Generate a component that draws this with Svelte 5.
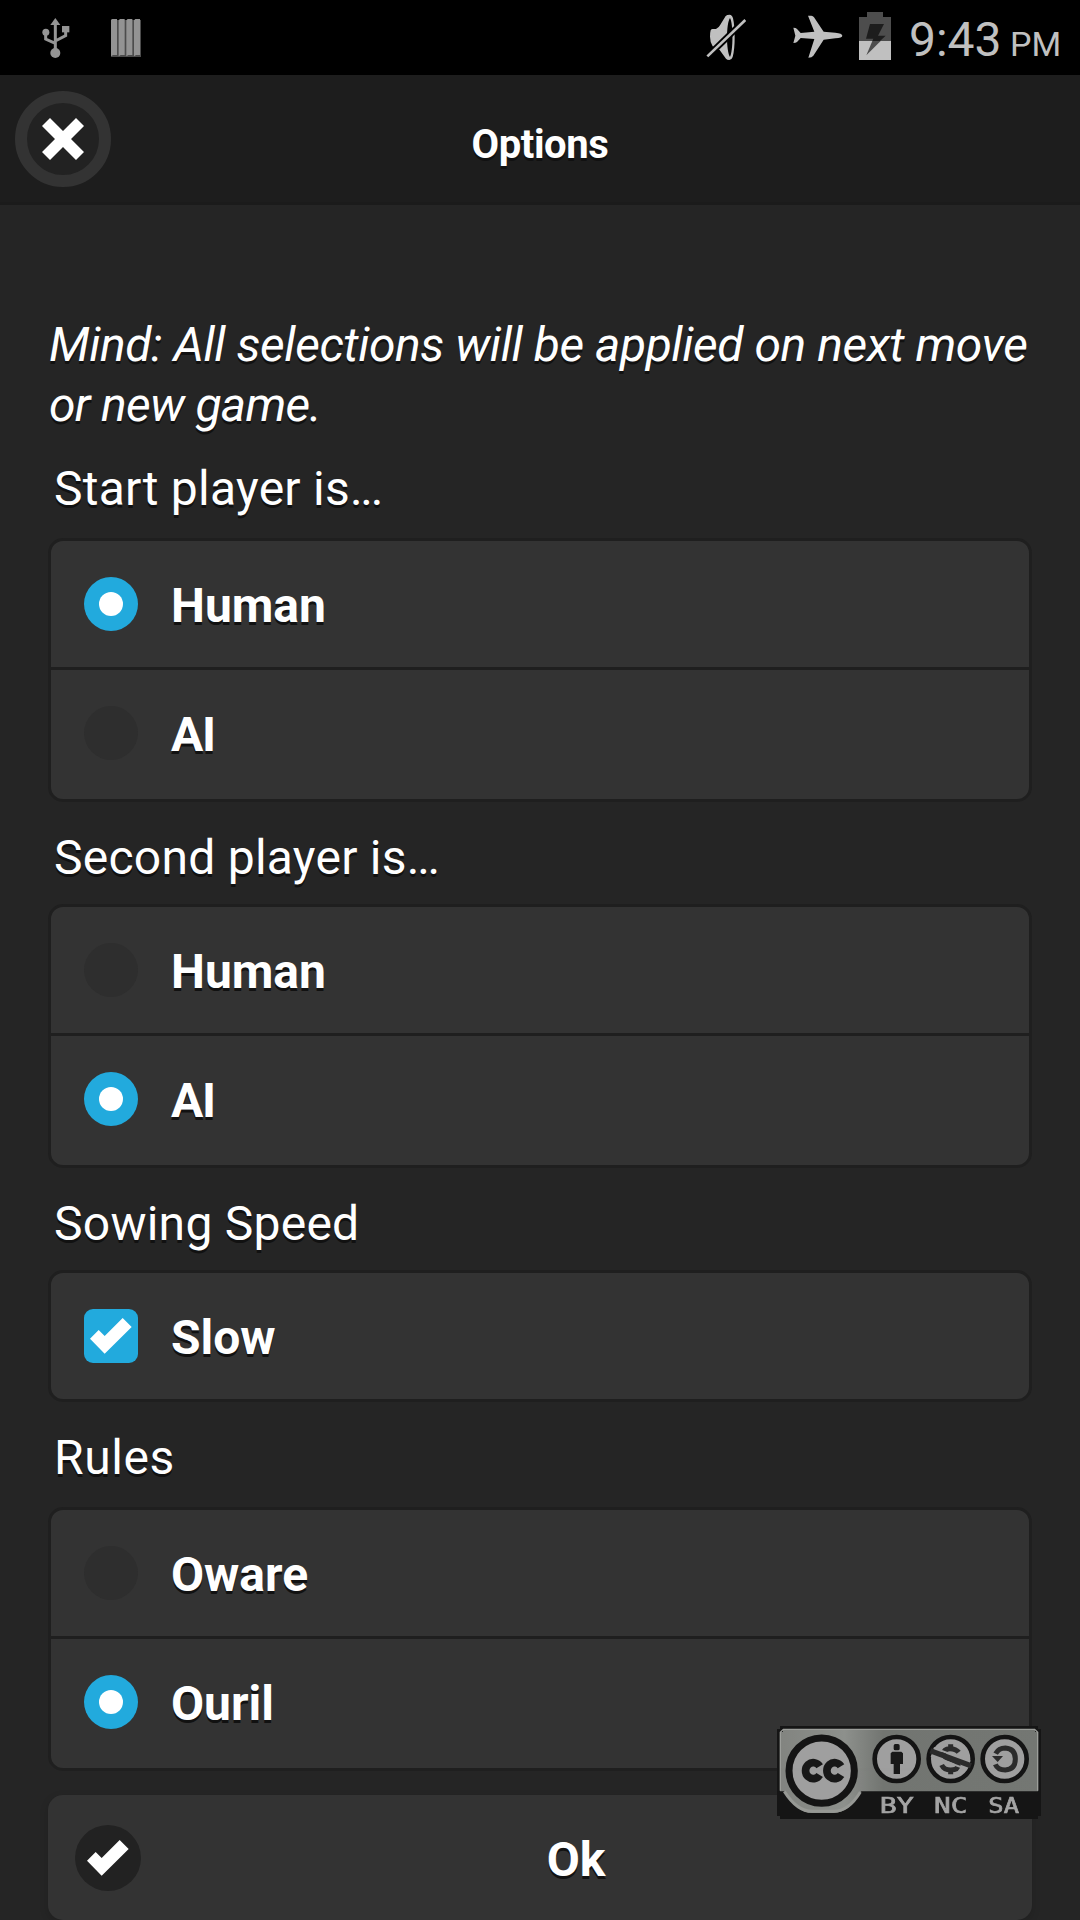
<script>
  let groups = $state([
    { title: 'Start player is', dots: true, spacing: 'first', kind: 'radio', options: ['Human', 'AI'], selected: 0 },
    { title: 'Second player is', dots: true, spacing: 'regular', kind: 'radio', options: ['Human', 'AI'], selected: 1 },
    { title: 'Sowing Speed', dots: false, spacing: 'regular', kind: 'checkbox', options: ['Slow'], selected: 0 },
    { title: 'Rules', dots: false, spacing: 'loose', kind: 'radio', options: ['Oware', 'Ouril'], selected: 1 }
  ]);

  function choose(group, i) {
    if (group.kind === 'checkbox') group.selected = group.selected === i ? -1 : i;
    else group.selected = i;
  }
</script>

{#snippet check()}
  <svg class="check" viewBox="0 0 126 108">
    <path fill="#fff" d="M0 62 26 36 44 54 98 0 125 27 44 107Z" />
  </svg>
{/snippet}

<div class="screen">
  <div class="status">
    <svg class="usb" viewBox="125 54 84 122" fill="#959595">
      <path d="M165 54 180 75H150Z" />
      <circle cx="136.500" cy="97" r="10.500" />
      <rect x="185" y="78" width="22" height="19" />
      <circle cx="165" cy="159" r="15" />
      <path fill="none" stroke="#959595" stroke-width="9" d="M165 70V150M136 97V117L165 130M196 92V107L165 123" />
    </svg>
    <svg class="bars" viewBox="333 57 90 114">
      <path fill="#4c4c4c" d="M345 60H423V171H333V160Z" />
      <g fill="#939393">
        <path d="M333 59l4-2h14v108h-12l-6 4Z" />
        <path d="M356 61l4-4h14v108h-12l-6 4Z" />
        <path d="M379 61l4-4h14v108h-12l-6 4Z" />
        <path d="M402 61l4-4h14v108h-12l-6 4Z" />
      </g>
    </svg>
    <span class="grow"></span>
    <svg class="mute" viewBox="78 42 120 140">
      <path fill="#c0c0c0" fill-rule="evenodd" d="M92 91Q94 87 98 87H108Q116 84 120 76L137 48Q141 44 149 44Q156 44 159 55Q164 75 164 112Q164 150 158 171Q155 180 148 180Q141 180 138 176L119 150L98 139Q90 125 90 110Q90 98 92 91ZM150 54C138 69 138 155 150 171C160 155 160 69 150 54Z" />
      <path stroke="#000" stroke-width="19" d="M78 174 200 55" />
      <path stroke="#c0c0c0" stroke-width="8" d="M82 169 196 60" />
    </svg>
    <svg class="plane" viewBox="338 46 150 130">
      <path fill="#c0c0c0" d="M383 48H393Q398 48 401 53L430 96L465 99Q486 101 486 108Q486 115 465 116L430 120L399 168Q395 174 384 174L402 118L361 115L350 127Q346 130 339 130L345 108L339 84Q347 84 350 88L361 100L402 96Z" />
    </svg>
    <svg class="battery" viewBox="537 36 96 144">
      <path fill="#4d4d4d" d="M561 36H609V51H633V124H537V51H561Z" />
      <path fill="#c0c0c0" d="M537 123H633V180H537Z" />
      <path fill="#1d1d1d" d="M570 72H612L594 107H617L600 123H577L580 116H558Z" />
      <path fill="#4d4d4d" d="M577 123H602L559 166Z" />
    </svg>
    <span class="time">9:43</span><span class="pm">PM</span>
  </div>

  <header>
    <button class="close" aria-label="Close">
      <svg viewBox="0 0 126 126"><path fill="#fff" d="M24 0 63 39 102 0 126 24 87 63 126 102 102 126 63 87 24 126 0 102 39 63 0 24Z" /></svg>
    </button>
    <h1>Options</h1>
  </header>

  <main>
    <p class="mind"><span class="l1">Mind: All selections will be applied on next move</span><br /><span class="l2">or new game.</span></p>
    {#each groups as group}
      <section class={group.spacing}>
        <h2>{group.title}{#if group.dots}<span class="dots">...</span>{/if}</h2>
        <div class="group">
          {#each group.options as option, i}
            <button class="row" onclick={() => choose(group, i)}>
              <span class="mark {group.kind}" class:on={group.selected === i}>
                {#if group.selected === i}
                  {#if group.kind === 'radio'}<i></i>{:else}{@render check()}{/if}
                {/if}
              </span>
              <span class="name" class:narrow={option === 'AI'}>{option}</span>
            </button>
          {/each}
        </div>
      </section>
    {/each}
    <button class="ok">
      <span class="disc">{@render check()}</span>
      <span class="oktext">Ok</span>
    </button>
  </main>

  <svg class="badge" viewBox="0 0 792 279">
    <defs>
      <linearGradient id="plate" x1="0" y1="0" x2="1" y2="0">
        <stop offset="0" stop-color="#858783" />
        <stop offset=".25" stop-color="#90938f" />
        <stop offset=".4" stop-color="#757874" />
        <stop offset="1" stop-color="#777a76" />
      </linearGradient>
    </defs>
    <path fill="#151515" d="M9 0H783V9H792V270H783V279H9V270H0V9H9Z" />
    <path fill="url(#plate)" d="M18 9H774V18H783V196H253Q215 261 170 261H105Q60 261 22 196H9V18H18Z" />
    <path fill="none" stroke="#a0a29e" stroke-width="4" d="M10 194V19L19 10H773L782 19V194" />
    <path fill="none" stroke="#9b9d99" stroke-width="9" d="M22 196Q60 256 105 256H170Q215 256 250 198" />
    <circle cx="134" cy="134" r="98" fill="#a3a3a3" stroke="#141414" stroke-width="21" />
    <g fill="none" stroke="#181818" stroke-width="23">
      <path d="M128 121A23 24 0 1 0 128 147" />
      <path d="M192 121A23 24 0 1 0 192 147" />
    </g>
    <g fill="#a3a3a3" stroke="#141414" stroke-width="14">
      <circle cx="359" cy="99" r="66" />
      <circle cx="521" cy="99" r="66" />
      <circle cx="683" cy="99" r="66" />
    </g>
    <g fill="#181818">
      <rect x="350" y="54" width="18" height="19" rx="5" />
      <path d="M346 77H373L378 82V114H369V144H350V114H341V82Z" />
    </g>
    <g fill="none" stroke="#2b2b2b" stroke-width="15">
      <path d="M545 79Q537 68 519 68Q500 68 500 83Q500 94 521 100Q543 107 543 118Q543 132 521 132Q501 132 494 117M521 55V70M521 130V145" />
      <path d="M470 66 580 106M462 90 570 130" stroke="#a3a3a3" stroke-width="6" />
      <path d="M460 74 582 119" stroke-width="16" />
      <path d="M656 83Q665 66 685 66Q715 68 715 99Q715 130 685 132Q662 132 655 115" />
    </g>
    <path fill="#2b2b2b" d="M645 90H678L662 108Z" />
    <g class="tags" fill="#a8a8a8" stroke="#a8a8a8" stroke-width="2">
      <text x="308" y="261" textLength="102" lengthAdjust="spacingAndGlyphs">BY</text>
      <text x="471" y="261" textLength="100" lengthAdjust="spacingAndGlyphs">NC</text>
      <text x="634" y="261" textLength="92" lengthAdjust="spacingAndGlyphs">SA</text>
    </g>
  </svg>
</div>

<style>
  :global(body) { margin: 0; background: #252525; }
  .screen {
    position: relative;
    width: 1080px;
    height: 1920px;
    overflow: hidden;
    background: #252525;
    color: #fff;
    font-family: Roboto, sans-serif;
    text-shadow: 0 3px 0 #111;
  }
  svg { display: block; flex: none; }
  button { font: inherit; color: inherit; border: 0; padding: 0; margin: 0; text-shadow: inherit; }
  h1, h2, p { margin: 0; }

  .status {
    display: flex;
    align-items: flex-start;
    height: 75px;
    box-sizing: border-box;
    padding: 0 18px 0 41.700px;
    background: #000;
    color: #c0c0c0;
    text-shadow: none;
  }
  .grow { flex: 1; }
  .usb { width: 28px; height: 40.700px; margin-top: 18px; }
  .bars { width: 30px; height: 38px; margin: 19px 0 0 41.300px; }
  .mute { width: 40px; height: 46.700px; margin-top: 14px; }
  .plane { width: 50px; height: 43.300px; margin: 15.300px 0 0 46.700px; }
  .battery { width: 32px; height: 48px; margin: 12px 0 0 16.300px; }
  .time { width: 90px; margin-left: 18px; font-size: 48px; line-height: 56px; padding-top: 12px; font-weight: 400; white-space: nowrap; }
  .pm { width: 52px; margin-left: 11px; font-size: 34px; line-height: 40px; padding-top: 24px; white-space: nowrap; }

  header {
    display: grid;
    grid-template-columns: 96px 1fr 96px;
    height: 130px;
    box-sizing: border-box;
    padding: 16px 15px 0;
    border-bottom: 3px solid #1b1b1b;
    background: #1d1d1d;
  }
  .close {
    display: flex;
    align-items: center;
    justify-content: center;
    width: 96px;
    height: 96px;
    box-sizing: border-box;
    border: 12px solid #333;
    border-radius: 50%;
    background: #222;
  }
  .close svg { width: 42px; height: 42px; }
  h1 { text-align: center; font-size: 40px; line-height: 52px; font-weight: 700; padding-top: 28px; letter-spacing: -0.400px; }

  main { padding: 110px 48px 0; }
  .mind { font-size: 48px; line-height: 60px; font-style: italic; height: 120px; padding-left: 1px; white-space: nowrap; }
  .l1 { letter-spacing: -0.450px; }
  .l2 { letter-spacing: -0.700px; }
  section { padding-top: 25px; }
  h2 { font-size: 48px; line-height: 62px; font-weight: 400; padding-left: 6px; margin-bottom: 15px; letter-spacing: 0.250px; }
  .dots { letter-spacing: -2.300px; }
  .first { padding-top: 23px; }
  .first h2 { margin-bottom: 18px; }
  .loose h2 { margin-bottom: 18px; letter-spacing: 0.600px; }
  .group {
    border: 3px solid #1f1f1f;
    border-radius: 15px;
    background: #333;
  }
  .row {
    display: flex;
    align-items: flex-start;
    width: 100%;
    height: 126px;
    box-sizing: border-box;
    padding: 36px 33px 0;
    background: none;
    text-align: left;
  }
  .row + .row { height: 132px; border-top: 3px solid #1f1f1f; }
  .mark {
    display: flex;
    align-items: center;
    justify-content: center;
    width: 54px;
    height: 54px;
    flex: none;
    background: #2e2e2e;
    border-radius: 50%;
  }
  .mark.checkbox { border-radius: 9px; }
  .mark.on { background: #22aadd; }
  .mark i { width: 24px; height: 24px; border-radius: 50%; background: #fff; }
  .check { width: 42px; height: 36px; }
  .name { margin-left: 33px; font-size: 48px; line-height: 62px; font-weight: 700; margin-top: -2px; }
  .name.narrow { letter-spacing: -1.200px; }
  .ok {
    display: flex;
    align-items: flex-start;
    width: 984px;
    height: 125px;
    margin-top: 24px;
    padding: 30px 21px 0 27px;
    box-sizing: border-box;
    border-radius: 15px;
    background: #333;
    box-shadow: 0 3px 9px rgba(0, 0, 0, 0.15);
  }
  .disc {
    display: flex;
    align-items: center;
    justify-content: center;
    width: 66px;
    height: 66px;
    border-radius: 50%;
    background: #222;
  }
  .oktext { flex: 1; text-align: center; font-size: 48px; line-height: 62px; font-weight: 700; padding-top: 4px; }

  /* Licence badge floats over the options list. */
  .badge { position: absolute; left: 777px; top: 1726px; width: 264px; height: 93px; text-shadow: none; opacity: 0.97; filter: blur(0.400px); }
  .tags { font-family: "DejaVu Sans Mono", monospace; font-size: 62px; }
</style>
